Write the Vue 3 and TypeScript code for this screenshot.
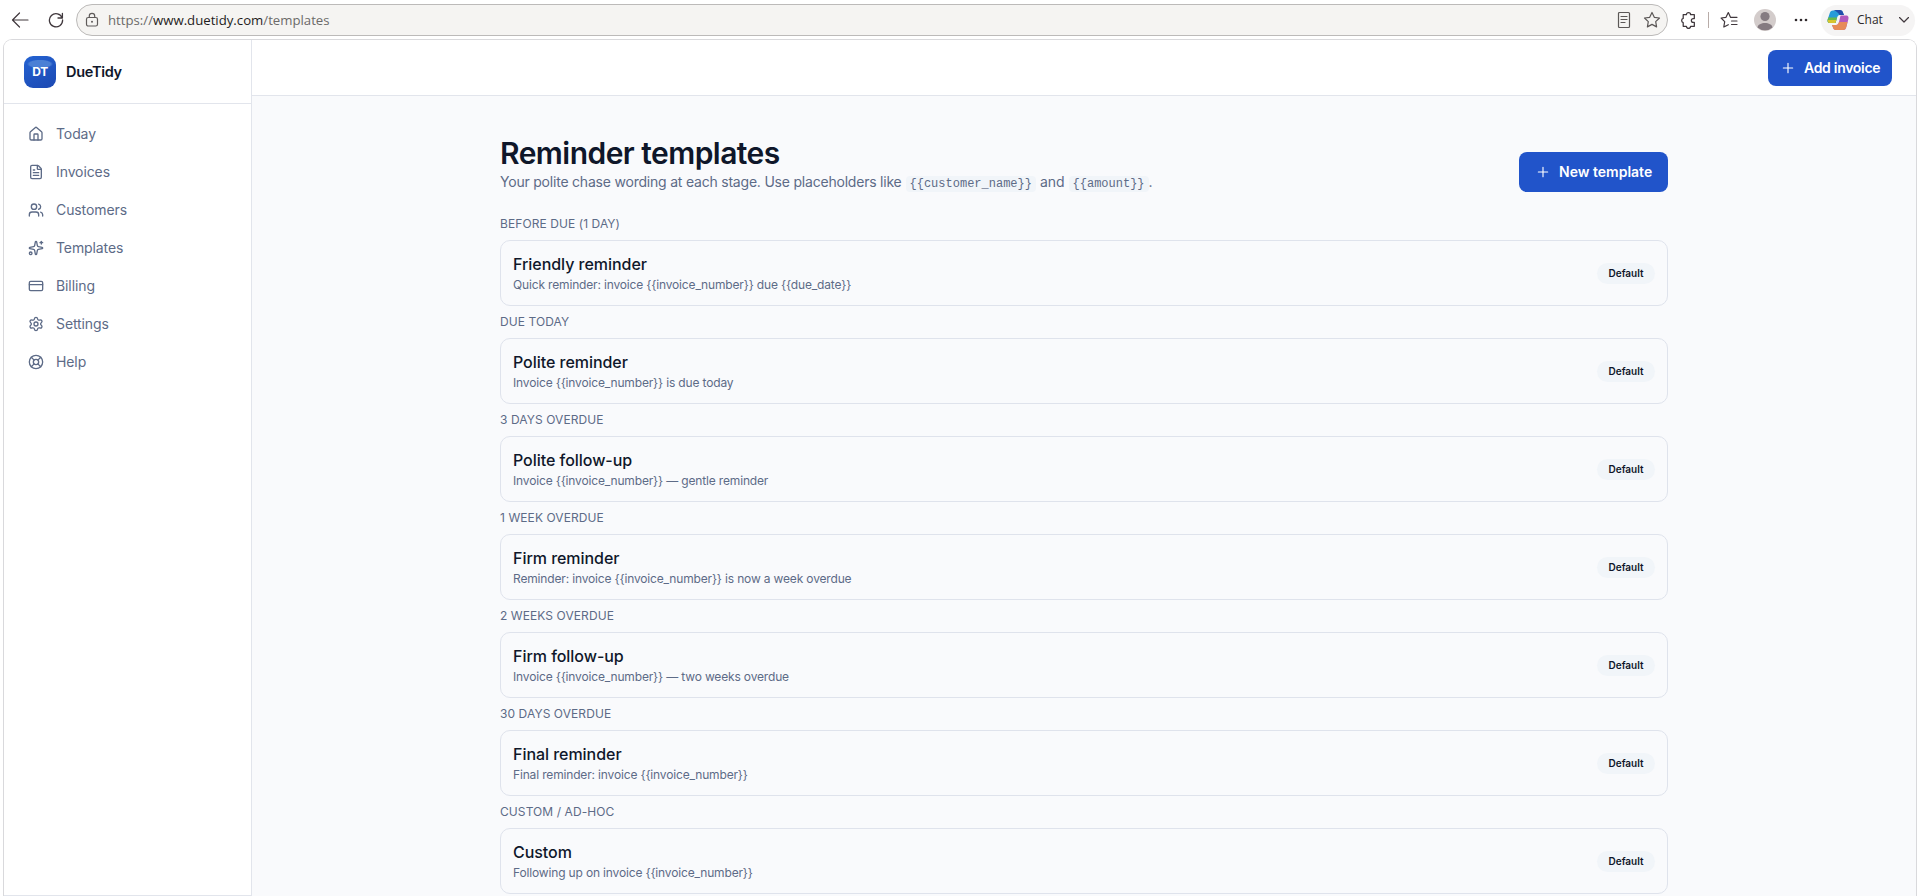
<script setup lang="ts">
interface NavItem {
  label: string
  paths: string[]
}
interface Template {
  stage: string
  name: string
  subject: string
}

const nav: NavItem[] = [
  {
    label: 'Today',
    paths: [
      'M15 21v-8a1 1 0 0 0-1-1h-4a1 1 0 0 0-1 1v8',
      'M3 10a2 2 0 0 1 .709-1.528l7-6a2 2 0 0 1 2.582 0l7 6A2 2 0 0 1 21 10v9a2 2 0 0 1-2 2H5a2 2 0 0 1-2-2z',
    ],
  },
  {
    label: 'Invoices',
    paths: [
      'M6 22a2 2 0 0 1-2-2V4a2 2 0 0 1 2-2h8a2.4 2.4 0 0 1 1.704.706l3.588 3.588A2.4 2.4 0 0 1 20 8v12a2 2 0 0 1-2 2z',
      'M14 2v5a1 1 0 0 0 1 1h5',
      'M10 9H8',
      'M16 13H8',
      'M16 17H8',
    ],
  },
  {
    label: 'Customers',
    paths: [
      'M16 21v-2a4 4 0 0 0-4-4H6a4 4 0 0 0-4 4v2',
      'M16 3.128a4 4 0 0 1 0 7.744',
      'M22 21v-2a4 4 0 0 0-3-3.87',
      'M5 7a4 4 0 1 0 8 0a4 4 0 1 0-8 0',
    ],
  },
  {
    label: 'Templates',
    paths: [
      'M11.017 2.814a1 1 0 0 1 1.966 0l1.051 5.558a2 2 0 0 0 1.594 1.594l5.558 1.051a1 1 0 0 1 0 1.966l-5.558 1.051a2 2 0 0 0-1.594 1.594l-1.051 5.558a1 1 0 0 1-1.966 0l-1.051-5.558a2 2 0 0 0-1.594-1.594l-5.558-1.051a1 1 0 0 1 0-1.966l5.558-1.051a2 2 0 0 0 1.594-1.594z',
      'M20 2v4',
      'M22 4h-4',
      'M2 20a2 2 0 1 0 4 0a2 2 0 1 0-4 0',
    ],
  },
  {
    label: 'Billing',
    paths: [
      'M4 5h16a2 2 0 0 1 2 2v10a2 2 0 0 1-2 2H4a2 2 0 0 1-2-2V7a2 2 0 0 1 2-2z',
      'M2 10h20',
    ],
  },
  {
    label: 'Settings',
    paths: [
      'M9.671 4.136a2.34 2.34 0 0 1 4.659 0 2.34 2.34 0 0 0 3.319 1.915 2.34 2.34 0 0 1 2.33 4.033 2.34 2.34 0 0 0 0 3.831 2.34 2.34 0 0 1-2.33 4.033 2.34 2.34 0 0 0-3.319 1.915 2.34 2.34 0 0 1-4.659 0 2.34 2.34 0 0 0-3.32-1.915 2.34 2.34 0 0 1-2.33-4.033 2.34 2.34 0 0 0 0-3.831A2.34 2.34 0 0 1 6.35 6.051a2.34 2.34 0 0 0 3.319-1.915',
      'M9 12a3 3 0 1 0 6 0a3 3 0 1 0-6 0',
    ],
  },
  {
    label: 'Help',
    paths: [
      'M2 12a10 10 0 1 0 20 0a10 10 0 1 0-20 0',
      'm4.93 4.93 4.24 4.24',
      'm14.83 9.17 4.24-4.24',
      'm14.83 14.83 4.24 4.24',
      'm9.17 14.83-4.24 4.24',
      'M8 12a4 4 0 1 0 8 0a4 4 0 1 0-8 0',
    ],
  },
]

const templates: Template[] = [
  { stage: 'Before due (1 day)', name: 'Friendly reminder', subject: 'Quick reminder: invoice {{invoice_number}} due {{due_date}}' },
  { stage: 'Due today', name: 'Polite reminder', subject: 'Invoice {{invoice_number}} is due today' },
  { stage: '3 days overdue', name: 'Polite follow-up', subject: 'Invoice {{invoice_number}} — gentle reminder' },
  { stage: '1 week overdue', name: 'Firm reminder', subject: 'Reminder: invoice {{invoice_number}} is now a week overdue' },
  { stage: '2 weeks overdue', name: 'Firm follow-up', subject: 'Invoice {{invoice_number}} — two weeks overdue' },
  { stage: '30 days overdue', name: 'Final reminder', subject: 'Final reminder: invoice {{invoice_number}}' },
  { stage: 'Custom / ad-hoc', name: 'Custom', subject: 'Following up on invoice {{invoice_number}}' },
]

const customerToken = '{{customer_name}}'
const amountToken = '{{amount}}'
</script>

<template>
  <div class="window">
    <header class="chrome">
      <svg class="back" viewBox="0 0 18 18"><path d="M17 9H1.500M8.500 2 1.500 9l7 7" /></svg>
      <svg class="reload" viewBox="0 0 16 16"><path d="M14.200 6A6.600 6.600 0 1 0 14.600 8M14.400 1.500V6H10" /></svg>
      <div class="address">
        <svg class="lock" viewBox="0 0 14 16"><rect x="1.500" y="5.500" width="11" height="8.500" rx="1.800" /><path d="M4.300 5.500V4a2.700 2.700 0 0 1 5.400 0v1.500" /><circle class="dot" cx="7" cy="9.700" r="1" /></svg>
        <span class="url">https://<b>www.duetidy.com</b>/templates</span>
        <svg class="reader" viewBox="0 0 14 18"><rect x="1.500" y="1.500" width="11" height="15" rx="1" /><path d="M4 5.500h6M4 8.500h6M4 11.500h4" /></svg>
        <svg class="star" viewBox="0 0 18 18"><path d="m9 1.500 2.300 4.800 5.200.700-3.800 3.600.900 5.300L9 13.400l-4.600 2.500.900-5.300L1.500 7l5.200-.700z" /></svg>
      </div>
      <svg class="puzzle" viewBox="0 0 16 17"><path d="M3 3.500h3a2 2 0 0 1 4 0h3.500v3.700h-1a1.800 1.800 0 0 0 0 3.600h1v3.700H10a2 2 0 0 1-4 0H3V11a2.100 2.100 0 0 1 0-4z" /></svg>
      <span class="divider"></span>
      <svg class="favorites" viewBox="0 0 18 18"><path d="M10.500 6.300 8.300 1.600 6 6.300l-4.900.700 3.600 3.600-.900 5.400 4.500-2.300M10.500 6.300H17M11.500 10H17M11.500 13.500H17" /></svg>
      <svg class="avatar" viewBox="0 0 22 22"><circle cx="11" cy="11" r="11" fill="#d3cccb" /><circle cx="11" cy="7.500" r="4.600" fill="#857b81" /><path d="M3.500 18.500c.500-6 14.500-6 15 0A11 11 0 0 1 11 21.300a11 11 0 0 1-7.500-2.800z" fill="#857b81" /></svg>
      <svg class="more" viewBox="0 0 14 4"><circle cx="2" cy="2" r="1.300" /><circle cx="7" cy="2" r="1.300" /><circle cx="12" cy="2" r="1.300" /></svg>
      <div class="chat">
        <svg class="copilot" viewBox="0 0 22 20">
          <path d="M6 .500h7c2 0 2.500 1 3 2.500L17 5h-4c-2 0-2.600 1.500-3 3l-1.500 5H3C.500 13 .200 11 .800 9l2-6C3.300 1.500 4 .500 6 .500z" fill="#279bd8" />
          <path d="M6.500 0H13c2 0 2.700 1.200 3.200 3L17 5h-4.500c-1-2-3-4-6-5z" fill="#214eac" />
          <path d="M1.300 7.500h8.800L8.500 13H3C.500 13 .200 11 .800 9z" fill="#69b849" />
          <path d="M.700 10h8.600l-.900 3H3c-1.700 0-2.500-1.300-2.300-3z" fill="#d7c52f" />
          <path d="M16 20H9c-2 0-2.500-1-3-2.500L5 15h4c2 0 2.600-1.500 3-3l1.500-6.500H19c2.500 0 2.900 2 2.300 4l-2 7.500c-.500 2-1.300 3-3.300 3z" fill="#b159bd" />
          <path d="M5 15h4c2 0 2.600-1.500 3-3h8.500l-1.200 5c-.500 2-1.300 3-3.300 3H9c-2 0-2.500-1-3-2.500z" fill="#e78b58" />
        </svg>
        <span>Chat</span>
        <svg class="chevron" viewBox="0 0 10 6"><path d="m.500.500 4.500 4.500L9.500.500" /></svg>
      </div>
    </header>

    <div class="page">
      <aside class="sidebar">
        <div class="brand">
          <span class="logo"><span>DT</span></span>
          <span class="brand-name">DueTidy</span>
        </div>
        <nav>
          <a v-for="item in nav" :key="item.label">
            <svg class="icon" viewBox="0 0 24 24"><path v-for="d in item.paths" :key="d" :d="d" /></svg>
            <span>{{ item.label }}</span>
          </a>
        </nav>
      </aside>

      <div class="body">
        <div class="topbar">
          <button class="btn small"><svg class="icon" viewBox="0 0 24 24"><path d="M5 12h14M12 5v14" /></svg><span>Add invoice</span></button>
        </div>
        <main>
          <div class="heading">
            <div>
              <h1>Reminder templates</h1>
              <p><span class="lead">Your polite chase wording at each stage. Use placeholders like</span> <code>{{ customerToken }}</code> and <code>{{ amountToken }}</code>.</p>
            </div>
            <button class="btn"><svg class="icon" viewBox="0 0 24 24"><path d="M5 12h14M12 5v14" /></svg><span>New template</span></button>
          </div>
          <section v-for="t in templates" :key="t.stage">
            <h2>{{ t.stage }}</h2>
            <div class="card">
              <div>
                <div class="name">{{ t.name }}</div>
                <div class="subject">{{ t.subject }}</div>
              </div>
              <span class="badge">Default</span>
            </div>
          </section>
        </main>
      </div>
    </div>
  </div>
</template>

<style>
body {
  margin: 0;
  overflow: hidden;
}
</style>

<style scoped>
* {
  box-sizing: border-box;
}
.window {
  height: 896px;
  display: flex;
  flex-direction: column;
  overflow: hidden;
  background: #fff;
  font-family: Inter, "Liberation Sans", sans-serif;
  color: #0f172a;
}
svg {
  display: block;
  flex: none;
  fill: none;
  stroke-linecap: round;
  stroke-linejoin: round;
}
.chrome {
  height: 39px;
  flex: none;
  display: flex;
  align-items: center;
  padding: 1px 1px 0 11px;
  stroke: #40383d;
  stroke-width: 1.2;
}
.back {
  width: 18px;
  height: 18px;
}
.reload {
  width: 16px;
  height: 16px;
  margin-left: 19px;
  stroke-width: 1.3;
}
.address {
  width: 1592px;
  height: 32px;
  margin-left: 12px;
  padding: 0 6px 0 8px;
  display: flex;
  align-items: center;
  border: 1px solid #bcbab9;
  border-radius: 16px;
  background: #f5f4f2;
}
.lock {
  width: 14px;
  height: 16px;
  stroke: #5f5b5a;
}
.lock .dot {
  fill: #5f5b5a;
  stroke: none;
}
.url {
  flex: 1;
  margin-left: 9px;
  font: 13.2px/18px "Open Sans", "Noto Sans", sans-serif;
  color: #6c6a69;
}
.url b {
  font-weight: 400;
  color: #1f1c1c;
}
.reader {
  width: 14px;
  height: 18px;
  stroke: #5c5857;
}
.star {
  width: 18px;
  height: 18px;
  margin-left: 12px;
  stroke: #5c5857;
}
.puzzle {
  width: 17px;
  height: 18px;
  margin-left: 12px;
}
.divider {
  width: 1px;
  height: 16px;
  margin-left: 11px;
  background: #b8aca8;
}
.favorites {
  width: 18px;
  height: 18px;
  margin-left: 11px;
}
.avatar {
  width: 22px;
  height: 22px;
  margin-left: 16px;
  stroke: none;
}
.more {
  width: 14px;
  height: 4px;
  margin-left: 18px;
  stroke: none;
  fill: #302a2d;
}
.chat {
  width: 94px;
  height: 31px;
  margin-left: 13px;
  padding: 0 6px;
  display: flex;
  align-items: center;
  border-radius: 16px;
  background: #f5f4f4;
  font: 12px/18px "Open Sans", "Noto Sans", sans-serif;
  color: #2c282a;
}
.copilot {
  width: 22px;
  height: 20px;
  margin-right: 8px;
  stroke: none;
}
.chevron {
  width: 10px;
  height: 6px;
  margin-left: auto;
}
.page {
  flex: 1;
  min-height: 0;
  display: flex;
  margin: 0 2px 0 3px;
  border: 1px solid #d9d9dc;
  border-bottom: 0;
  border-radius: 9px 9px 0 0;
  overflow: hidden;
}
.sidebar {
  width: 248px;
  flex: none;
  border-right: 1px solid #e2e5ec;
  border-bottom: 1px solid #e2e5ec;
  background: #fff;
}
.brand {
  height: 64px;
  display: flex;
  align-items: center;
  gap: 10px;
  padding: 0 0 0 20px;
  border-bottom: 1px solid #e2e5ec;
}
.logo {
  width: 32px;
  height: 32px;
  display: grid;
  place-items: center;
  border-radius: 9px;
  background: radial-gradient(ellipse 13px 4.500px at 50% 8px, #4b80d5 80%, transparent), linear-gradient(150deg, #2463d2, #1c48b2);
  color: #fff;
  font-size: 12px;
  font-weight: 700;
  letter-spacing: -0.3px;
}
.brand-name {
  font-size: 14.5px;
  font-weight: 600;
  letter-spacing: -0.3px;
}
nav {
  display: flex;
  flex-direction: column;
  gap: 2px;
  padding: 12px;
}
nav a {
  height: 36px;
  display: flex;
  align-items: center;
  gap: 12px;
  padding: 0 12px;
  font-size: 14px;
  line-height: 18px;
  letter-spacing: -0.1px;
  color: #5d6b87;
}
nav a span {
  padding-bottom: 1px;
}
.icon {
  width: 16px;
  height: 16px;
  stroke: currentColor;
  stroke-width: 2;
}
.body {
  flex: 1;
  display: flex;
  flex-direction: column;
  background: #f9fafc;
}
.topbar {
  height: 56px;
  flex: none;
  display: flex;
  align-items: flex-start;
  justify-content: flex-end;
  padding: 10px 24px 0 0;
  border-bottom: 1px solid #e2e5ec;
  background: #fff;
}
.btn {
  width: 149px;
  height: 40px;
  flex: none;
  display: flex;
  align-items: center;
  gap: 8px;
  padding: 0 0 0 16px;
  border: 0;
  border-radius: 8px;
  background: #2154ca;
  color: #fff;
  font: 600 14px/20px Inter, sans-serif;
  white-space: nowrap;
}
.btn.small {
  width: 124px;
  height: 36px;
  padding-left: 12px;
  letter-spacing: -0.3px;
}
.btn .icon {
  stroke-width: 1.7;
}
main {
  width: 1168px;
  margin: 0 auto;
  padding-top: 39px;
}
.heading {
  height: 81px;
  display: flex;
  justify-content: space-between;
}
.heading .btn {
  margin-top: 17px;
}
h1 {
  margin: 0;
  font-size: 30px;
  line-height: 36px;
  font-weight: 600;
  letter-spacing: -0.54px;
}
p {
  margin: 1px 0 0;
  font-size: 14px;
  line-height: 20px;
  color: #5d6b87;
}
.lead {
  letter-spacing: -0.21px;
}
code {
  padding: 1px 4px;
  border-radius: 4px;
  background: #f1f5f9;
  font: 12px "Liberation Mono", monospace;
}
section {
  height: 98px;
}
h2 {
  margin: 0 0 8px;
  font-size: 12px;
  line-height: 16px;
  font-weight: 400;
  letter-spacing: 0.08px;
  text-transform: uppercase;
  color: #5d6b87;
}
.card {
  height: 66px;
  display: flex;
  align-items: center;
  justify-content: space-between;
  padding: 0 12px;
  border: 1px solid #dfe3ec;
  border-radius: 10px;
}
.name {
  padding-bottom: 1px;
  font-size: 16px;
  line-height: 23px;
  font-weight: 500;
  letter-spacing: -0.04px;
}
.subject {
  font-size: 12px;
  line-height: 16px;
  letter-spacing: -0.16px;
  color: #5d6b87;
}
.badge {
  width: 58px;
  height: 21px;
  border-radius: 11px;
  background: #f1f5f9;
  text-align: center;
  font-size: 10px;
  line-height: 21px;
  font-weight: 600;
}
</style>
